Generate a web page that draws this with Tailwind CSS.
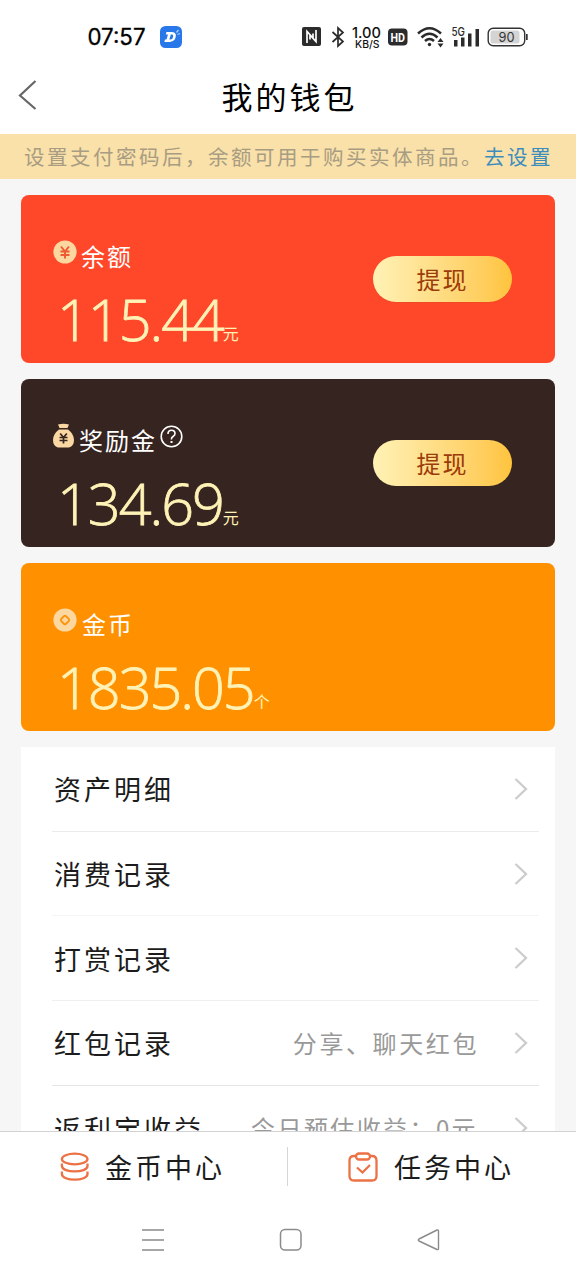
<!DOCTYPE html>
<html lang="zh-CN">
<head>
<meta charset="utf-8">
<title>我的钱包</title>
<script src="https://cdn.jsdelivr.net/npm/@tailwindcss/browser@4"></script>
</head>
<body class="w-[576px] h-[1280px] overflow-hidden bg-white flex flex-col font-['Noto_Sans_CJK_SC',sans-serif] font-normal text-[#1c1c1c]">
<header class="h-[134px] shrink-0 flex flex-col bg-white">
  <div class="h-[73px] flex items-center pl-[87px] pr-[47px] text-[#2b2b2b] font-[Roboto,sans-serif]">
    <span class="w-[73px] whitespace-nowrap text-black font-[Inter,sans-serif]"><svg class="block overflow-visible" width="60" height="30" viewBox="0 0 60 30"><text x="0.5" y="23" font-size="22.5" font-weight="400" stroke="#000" stroke-width="0.300" textLength="58" lengthAdjust="spacingAndGlyphs">07:57</text></svg></span>
    <svg width="22" height="22" viewBox="0 0 22 22"><rect width="22" height="22" rx="5.5" fill="#2878ea"/><path d="M6.500 6H11.500q5 0 4.300 4.500T10 16H4.300L5 13.500H6.500L8 8.500H5.800ZM10.800 8.500 9.300 13.500H10.500q2 0 2.600-2.600T11.800 8.500Z" fill="#fff" fill-rule="evenodd"/><path d="M17.500 8.500l2.500-1M16.500 6.500l2-2.500" stroke="#a9ccff" stroke-width="1.300"/></svg>
    <svg class="ml-[120px]" width="19" height="19" viewBox="0 0 19 19"><rect width="19" height="19" rx="2" fill="#2b2b2b"/><path d="M5 16V4.500L11 11V6.500M14 3V14.500L8 8V12.500" fill="none" stroke="#fff" stroke-width="1.700"/></svg>
    <svg class="ml-[10px]" width="14" height="22" viewBox="0 0 14 22"><path d="M1.500 6 12 15.500 7 20V2l5 4.500L1.500 16" fill="none" stroke="#2b2b2b" stroke-width="1.700"/></svg>
    <svg class="ml-[6px] overflow-visible" width="32" height="26" viewBox="0 0 32 26" fill="#111" font-family="Inter,sans-serif" font-weight="500"><text x="1" y="13.500" font-size="14.500" textLength="29" lengthAdjust="spacingAndGlyphs">1.00</text><text x="4" y="24" font-size="10.500" textLength="24.500" lengthAdjust="spacingAndGlyphs">KB/S</text></svg>
    <svg class="ml-[5px]" width="20" height="18" viewBox="0 0 20 18"><rect y="0.500" width="19.500" height="17" rx="4" fill="#2b2b2b"/><text x="2.500" y="13.500" font-family="Roboto,sans-serif" font-size="12.500" font-weight="700" fill="#fff" textLength="14.500" lengthAdjust="spacingAndGlyphs">HD</text></svg>
    <svg class="ml-[9px]" width="27" height="22" viewBox="0 0 27 22" fill="none" stroke="#2b2b2b" stroke-width="2.500"><path d="M1 7.500Q12.500-3 24 7.500M4.500 11.500Q12.500 4 20.500 11.500M8 15Q12.500 11 17 15"/><circle cx="12.500" cy="18.500" r="1.700" fill="#2b2b2b" stroke="none"/><path d="M20.500 16l3-4 3 4ZM20.500 17.500h6l-3 4Z" fill="#2b2b2b" stroke="none"/></svg>
    <svg class="ml-[7px] overflow-visible" width="30" height="22" viewBox="0 0 30 22" fill="#2b2b2b"><text x="0.500" y="9.500" font-family="Inter,sans-serif" font-size="11.500" font-weight="500" textLength="13.500" lengthAdjust="spacingAndGlyphs">5G</text><path d="M3 14h3.500v6.500H3ZM10 11.500h3.500v9H10ZM17 7.500h3.500v13H17ZM24.500 3H28v17.500h-3.500Z"/></svg>
    <svg class="ml-[6px]" width="42" height="20" viewBox="0 0 42 20"><rect x="1.200" y="1.200" width="36.500" height="17.600" rx="5" fill="none" stroke="#333" stroke-width="1.400"/><rect x="3.500" y="3.500" width="29" height="13" rx="2.500" fill="#d4d4d4"/><path d="M39 7h1.700v6H39Z" fill="#333"/><text x="11.500" y="14.700" font-family="Inter,sans-serif" font-size="13.500" font-weight="400" fill="#333" textLength="16" lengthAdjust="spacingAndGlyphs">90</text></svg>
  </div>
  <div class="h-[48px] flex items-start justify-center relative">
    <svg class="absolute left-[17px] top-[6px]" width="21" height="32" viewBox="0 0 21 32"><path d="M18.500 2 3 16.500 18.500 30" fill="none" stroke="#666" stroke-width="2.200"/></svg>
    <h1 class="mt-[7px] text-[31px] leading-none tracking-[3px] pl-[3px] text-black">我的钱包</h1>
  </div>
</header>
<main class="h-[997px] shrink-0 overflow-hidden bg-[#f6f6f6]">
  <div class="h-[45px] bg-[#f9e1a9] flex items-center pl-[24px] text-[20.500px] tracking-[2.500px] leading-none whitespace-nowrap text-[#a89c82]">设置支付密码后，余额可用于购买实体商品。<span class="text-[#3b8dbd]">去设置</span></div>
  <div class="mt-4 ml-[21px] w-[534px] flex flex-col gap-4">
    <section class="h-[168px] rounded-lg bg-[#ff482a] flex items-start justify-between pl-[32px] pr-[43px]">
      <div>
        <div class="mt-[43px] h-[36px] flex items-start text-white text-[24px] leading-[36px] tracking-[2px]"><svg class="mt-[2px] mr-[4px]" width="24" height="24" viewBox="0 0 24 24"><circle cx="12" cy="12" r="11.600" fill="#fcd7a0"/><path d="M8 6.500l4 5 4-5M12 11.500v7M7.500 11.500h9M7.500 15h9" fill="none" stroke="#ee5a32" stroke-width="1.900"/></svg>余额</div>
        <div class="mt-[15px] pl-[4px] flex items-start text-[#fff2b6]"><span class="font-['Open_Sans',sans-serif] font-light [-webkit-text-stroke:0.8px_#fff2b6] text-[57.500px] leading-[60px] tracking-[-2px]">115.44</span><span class="mt-[36px] text-[16px] leading-none">元</span></div>
      </div>
      <button class="mt-[61px] w-[139px] h-[46px] rounded-full bg-linear-to-r from-[#fff2b5] to-[#ffc43c] text-[#9c3b0b] text-[24px] leading-none tracking-[2px] shadow-[0_1px_1px_#d94a1866]">提现</button>
    </section>
    <section class="h-[168px] rounded-lg bg-[#35241f] flex items-start justify-between pl-[32px] pr-[43px]">
      <div>
        <div class="mt-[43px] h-[36px] flex items-start text-white text-[24px] leading-[36px] tracking-[2px]"><svg class="mt-[1px] mr-[5px]" width="21" height="26" viewBox="0 0 21 26"><path d="M5 1.500Q10.500 0 16 1.500L14.500 5H6.500ZM6 6.500h9Q21 11 21 17t-5 7.500H5Q0 23 0 17T6 6.500Z" fill="#fbd8a3"/><path d="M7.200 10.500l3.300 4 3.300-4M10.500 14.500v6M6.500 14.500h8M6.500 17.500h8" fill="none" stroke="#35241f" stroke-width="1.700"/></svg>奖励金<svg class="ml-[3px] mt-[3px]" width="23" height="23" viewBox="0 0 23 23" fill="none" stroke="#fff" stroke-width="1.600"><circle cx="11.500" cy="11.500" r="10.300"/><path d="M8 9q0-3.800 3.500-3.800T15 8.500q0 1.700-2 3t-1.500 3"/><path d="M11.500 16v2" stroke-width="2"/></svg></div>
        <div class="mt-[15px] pl-[4px] flex items-start text-[#fff2b6]"><span class="font-['Open_Sans',sans-serif] font-light [-webkit-text-stroke:0.8px_#fff2b6] text-[57.500px] leading-[60px] tracking-[-2px]">134.69</span><span class="mt-[36px] text-[16px] leading-none">元</span></div>
      </div>
      <button class="mt-[61px] w-[139px] h-[46px] rounded-full bg-linear-to-r from-[#fff2b5] to-[#ffc43c] text-[#9c3b0b] text-[24px] leading-none tracking-[2px]">提现</button>
    </section>
    <section class="h-[168px] rounded-lg bg-[#ff9100] pl-[32px] flex items-start">
      <div>
        <div class="mt-[43px] h-[36px] flex items-start text-white text-[24px] leading-[36px] tracking-[2px]"><svg class="mt-[2px] mr-[5px]" width="24" height="24" viewBox="0 0 24 24"><circle cx="12" cy="12" r="11.600" fill="#fcd7a0"/><rect x="8.600" y="8.600" width="6.800" height="6.800" rx="1.500" transform="rotate(45 12 12)" fill="none" stroke="#fa950c" stroke-width="1.900"/></svg>金币</div>
        <div class="mt-[15px] pl-[4px] flex items-start text-[#fff2b6]"><span class="font-['Open_Sans',sans-serif] font-light [-webkit-text-stroke:0.8px_#fff2b6] text-[57.500px] leading-[60px] tracking-[-2px]">1835.05</span><span class="mt-[36px] text-[16px] leading-none">个</span></div>
      </div>
    </section>
    <ul class="bg-white pl-[31px] pr-[16px] text-[27px] leading-none tracking-[3px]">
      <li class="h-[84.700px] border-b border-[#ebebeb] flex items-center pl-[2px] pr-[11px]"><span class="grow">资产明细</span><svg width="14" height="22" viewBox="0 0 14 22"><path d="M1.500 1 12 11 1.500 21" fill="none" stroke="#ccc" stroke-width="2.300"/></svg></li>
      <li class="h-[84.700px] border-b border-[#f5f5f5] flex items-center pl-[2px] pr-[11px]"><span class="grow">消费记录</span><svg width="14" height="22" viewBox="0 0 14 22"><path d="M1.500 1 12 11 1.500 21" fill="none" stroke="#ccc" stroke-width="2.300"/></svg></li>
      <li class="h-[84.700px] border-b border-[#efefef] flex items-center pl-[2px] pr-[11px]"><span class="grow">打赏记录</span><svg width="14" height="22" viewBox="0 0 14 22"><path d="M1.500 1 12 11 1.500 21" fill="none" stroke="#ccc" stroke-width="2.300"/></svg></li>
      <li class="h-[84.700px] border-b border-[#e6e6e6] flex items-center pl-[2px] pr-[11px]"><span class="grow">红包记录</span><span class="mr-[35px] text-[24px] tracking-[2.600px] text-[#999]">分享、聊天红包</span><svg width="14" height="22" viewBox="0 0 14 22"><path d="M1.500 1 12 11 1.500 21" fill="none" stroke="#ccc" stroke-width="2.300"/></svg></li>
      <li class="h-[84.700px] flex items-center pl-[2px] pr-[11px]"><span class="grow">返利宝收益</span><span class="mr-[36px] text-[24px] tracking-[2.400px] text-[#999]">今日预估收益：0元</span><svg width="14" height="22" viewBox="0 0 14 22"><path d="M1.500 1 12 11 1.500 21" fill="none" stroke="#ccc" stroke-width="2.300"/></svg></li>
    </ul>
  </div>
</main>
<nav class="h-[74px] shrink-0 border-t border-[#d2d2d2] flex pt-[15px] text-[27px] leading-[38px] tracking-[3px]">
  <a class="w-[288px] h-[39px] border-r border-[#d5d5d5] flex items-center pl-[60px]"><svg class="mr-[15px]" width="30" height="30" viewBox="0 0 30 30" fill="none" stroke="#ec7145" stroke-width="2.300"><ellipse cx="14.700" cy="7" rx="12.800" ry="5.300"/><path d="M1.900 11.500v2.500c0 7.200 25.600 7.200 25.600 0v-2.500M1.900 19.500v2.500c0 7.600 25.600 7.600 25.600 0v-2.500"/></svg>金币中心</a>
  <a class="h-[39px] flex items-center pl-[60px]"><svg class="mr-[16px]" width="30" height="30" viewBox="0 0 30 30" fill="none" stroke="#ec7145" stroke-width="2.300"><path d="M8 4H6q-4.500 0-4.500 4.500V24Q1.500 28.500 6 28.500H24q4.500 0 4.500-4.500V8.500q0-4.500-4.500-4.500H22"/><rect x="8" y="1.500" width="14" height="6" rx="3"/><path d="M9 15.500l5.500 5 7.500-7.500"/></svg>任务中心</a>
</nav>
<footer class="grow flex items-start pt-[23px] pl-[141px]">
  <svg width="24" height="24" viewBox="0 0 24 24" stroke="#8b8b8b" stroke-width="1.600"><path d="M1 2h22M1 12h22M1 22h22"/></svg>
  <svg class="ml-[114px]" width="24" height="24" viewBox="0 0 24 24" fill="none" stroke="#8b8b8b" stroke-width="1.500"><rect x="1.500" y="1.500" width="20.500" height="20.500" rx="4.500"/></svg>
  <svg class="ml-[114px]" width="24" height="24" viewBox="0 0 24 24" fill="none" stroke="#8b8b8b" stroke-width="1.400" stroke-linejoin="round"><path d="M2 11 20 2q1.500-.5 1.500 1V20.500q0 1.500-1.500 1L2 13Q.500 12 2 11Z"/></svg>
</footer>
</body>
</html>
